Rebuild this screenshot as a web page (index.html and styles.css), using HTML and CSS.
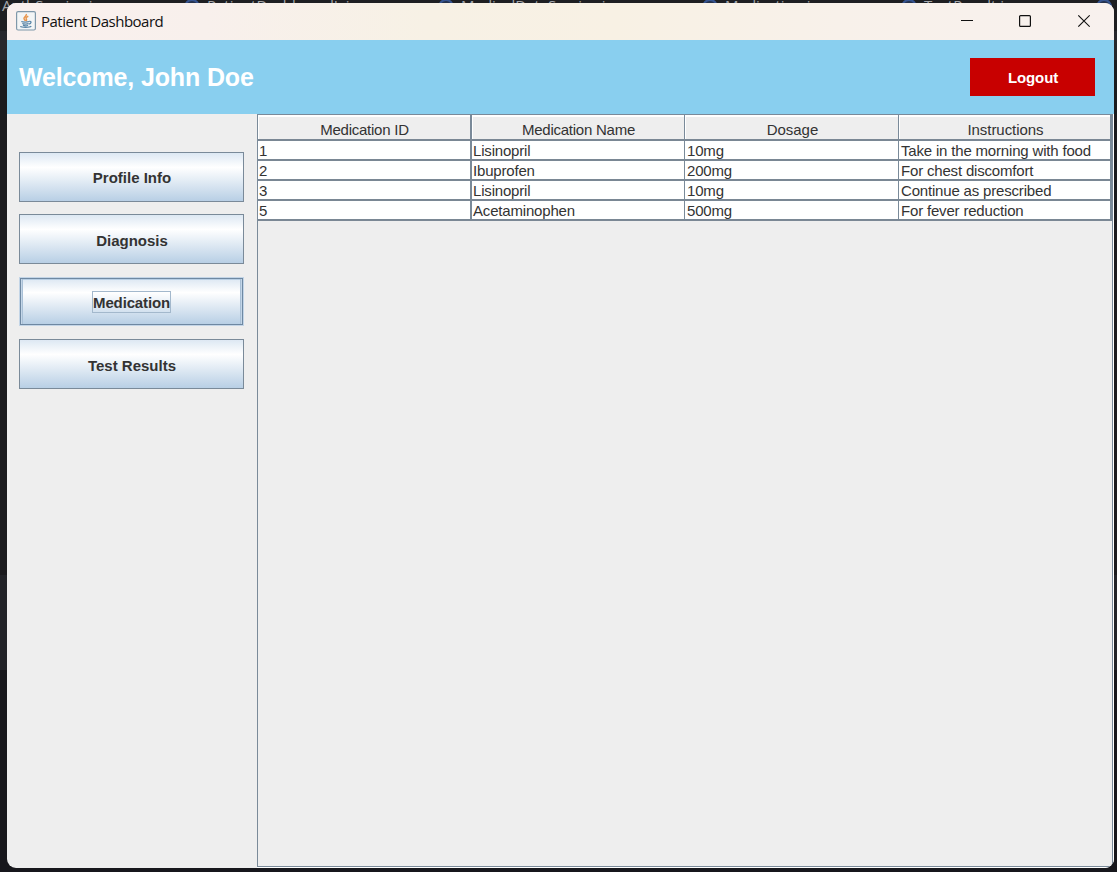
FILE: index.html
```html
<!DOCTYPE html>
<html lang="en">
<head>
<meta charset="utf-8">
<title>Patient Dashboard</title>
<link rel="stylesheet" href="styles.css">
</head>
<body>
<div class="desktop">
  <div class="editor-tabs">
    <span class="tab tab-1">AuthService.java</span>
    <span class="tab tab-2"><i class="dot"></i>PatientDashboardL.java</span>
    <span class="tab tab-3"><i class="dot"></i>MedicalDataService.java</span>
    <span class="tab tab-4"><i class="dot"></i>Medication.java</span>
    <span class="tab tab-5"><i class="dot"></i>TestResult.java</span>
    <span class="tab tab-6"><i class="dot"></i></span>
  </div>
  <div class="window">
    <div class="titlebar">
      <svg class="app-icon" width="20" height="20" viewBox="0 0 20 20">
        <rect x=".6" y=".6" width="18.8" height="18.4" rx="1.5" fill="#f3f5f6" stroke="#7f98aa" stroke-width="1.2"/>
        <path d="M10.3 3c.8 2-2.700 2.800-2.300 4.700.2.900 1 1.400 1.500 2.300M12.300 5.200c-2 .9-2.700 1.700-2 2.700.5.800.4 1.300-.2 2.100" fill="none" stroke="#e8964f" stroke-width="1.500"/>
        <path d="M5.300 10.500c1.500.7 6 .7 7.900 0M6.300 12.500c1.500.7 5 .7 6.200 0M7 14.200c1.200.6 4 .6 5 0M13.300 10.400c2.500-.4 2.200 2.200-.5 2.700M4.300 15.400c1.300 1.300 9.500 1.200 11-.1" fill="none" stroke="#5b87a8" stroke-width="1.300"/>
      </svg>
      <span class="title">Patient Dashboard</span>
      <svg class="controls" width="130" height="14" viewBox="0 0 130 14" fill="none" stroke="#111" stroke-width="1.200">
        <path d="M1 6.500h12"/>
        <rect x="59.600" y="1.600" width="10.800" height="10.800" rx="1"/>
        <path d="M118.300 1.300l11.400 11.400M129.700 1.300L118.300 12.700"/>
      </svg>
    </div>
    <div class="banner">
      <div class="welcome">Welcome, John Doe</div>
      <div class="logout">Logout</div>
    </div>
    <div class="content">
      <div class="sidebar">
        <div class="btn first"><span>Profile Info</span></div>
        <div class="btn"><span>Diagnosis</span></div>
        <div class="btn focused"><span class="label">Medication</span></div>
        <div class="btn"><span>Test Results</span></div>
      </div>
      <div class="pane">
        <div class="table">
          <div class="row head"><div>Medication ID</div><div>Medication Name</div><div>Dosage</div><div>Instructions</div></div>
          <div class="row"><div>1</div><div>Lisinopril</div><div>10mg</div><div>Take in the morning with food</div></div>
          <div class="row"><div>2</div><div>Ibuprofen</div><div>200mg</div><div>For chest discomfort</div></div>
          <div class="row"><div>3</div><div>Lisinopril</div><div>10mg</div><div>Continue as prescribed</div></div>
          <div class="row"><div>5</div><div>Acetaminophen</div><div>500mg</div><div>For fever reduction</div></div>
        </div>
      </div>
    </div>
  </div>
</div>
</body>
</html>
```
FILE: styles.css
```css
* { box-sizing: border-box; }
body { margin: 0; font-family: "Liberation Sans", Arial, sans-serif; font-size: 15px; color: #333; }
.desktop { position: relative; width: 1117px; height: 872px; overflow: hidden; background: linear-gradient(#1e1f22 0 31px, #26272c 31px 60px, #1b1b1e 60px 575px, #222328 575px 670px, #17171c 670px); padding: 3px 3px 4px 7px; }
.editor-tabs { position: absolute; left: 0; top: -5px; width: 1117px; height: 20px; font: 15px/20px "Open Sans", sans-serif; color: #a4a6ab; }
.tab { position: absolute; top: 0; display: flex; gap: 7px; white-space: nowrap; }
.tab-1 { left: 2px; }
.tab-2 { left: 184px; }
.tab-3 { left: 438px; }
.tab-4 { left: 702px; }
.tab-5 { left: 901px; }
.tab-6 { left: 1096px; }
.dot { width: 16px; height: 16px; margin-top: 4px; border-radius: 50%; border: 2px solid #35538f; background: #25324d; }
.window { position: relative; height: 865px; display: flex; flex-direction: column; border-radius: 9px; overflow: hidden; background: #eee; }
.titlebar { height: 37px; display: flex; align-items: center; padding: 0 24px 0 9px; background: linear-gradient(90deg, #f9f0ee 0%, #f8f0ec 18%, #f7f1e5 38%, #f8f1e4 55%, #f8f1ea 75%, #f8f1ee 100%); }
.app-icon { margin-top: -2px; }
.title { margin: -2px 0 0 5px; font: 15px/20px "Open Sans", sans-serif; letter-spacing: -.5px; color: #111; }
.controls { margin-left: auto; margin-top: -1px; }
.banner { height: 74px; display: flex; align-items: center; justify-content: space-between; padding: 0 19px 0 12px; background: #89cfef; }
.welcome { color: #fff; font-size: 25px; font-weight: bold; letter-spacing: -.14px; }
.logout { width: 125px; height: 38px; padding-left: 1px; background: #c80000; color: #fff; font-weight: bold; text-align: center; line-height: 39px; letter-spacing: -.1px; }
.content { flex: 1; display: flex; }
.sidebar { width: 250px; padding: 38px 13px 0 12px; display: flex; flex-direction: column; gap: 12.4px; }
.btn { height: 50px; display: flex; align-items: center; justify-content: center; padding: 2px 0 0 1px; border: 1px solid #7a8a99; background: linear-gradient(#dde8f3 0%, #fff 30%, #b8cfe5 100%); font-weight: bold; }
.first { padding-top: 0; }
.focused { height: 47px; margin: 1px 1px 2px; padding: 1px 0 0; border-color: #6e88a2; box-shadow: inset 1px 0 #c4d6e8, inset 2px 0 #a9c0d6, inset -1px 0 #c4d6e8, inset -2px 0 #a9c0d6, inset 0 1px #b8cfe5, 0 0 0 1px #c3d5e7, 0 1px #b8cfe5; }
.label { height: 22px; line-height: 22px; padding-top: 2px; letter-spacing: -.15px; border: 1px solid #a3b8cc; display: flex; align-items: center; }
.pane { flex: 1; border: 1px solid #7a8a99; margin: 0 1px 1px 0; box-shadow: 0 0 0 1px #fff; clip-path: inset(0 -1px -1px 0); }
.table { display: flex; flex-direction: column; width: 854px; letter-spacing: -.18px; }
.row { display: grid; grid-template-columns: 214px 213px 214px 213px; height: 20px; background: #fff; border-bottom: 2px solid #7a8794; line-height: 20px; white-space: nowrap; }
.row > div { border-right: 1px solid #7a8a99; padding-left: 2px; height: 18px; }
.row > div:first-child { border-right-width: 2px; padding-left: 1px; }
.row > div:nth-child(2) { padding-left: 1px; }
.row > div:last-child { border-right-width: 2px; }
.head { height: 26px; letter-spacing: -.25px; }
.head > div { height: 24px; background: #eee; box-shadow: inset 1px 2px #fff; text-align: center; line-height: 29px; }
.head > div:nth-child(3), .head > div:nth-child(4) { letter-spacing: -.05px; }
```
